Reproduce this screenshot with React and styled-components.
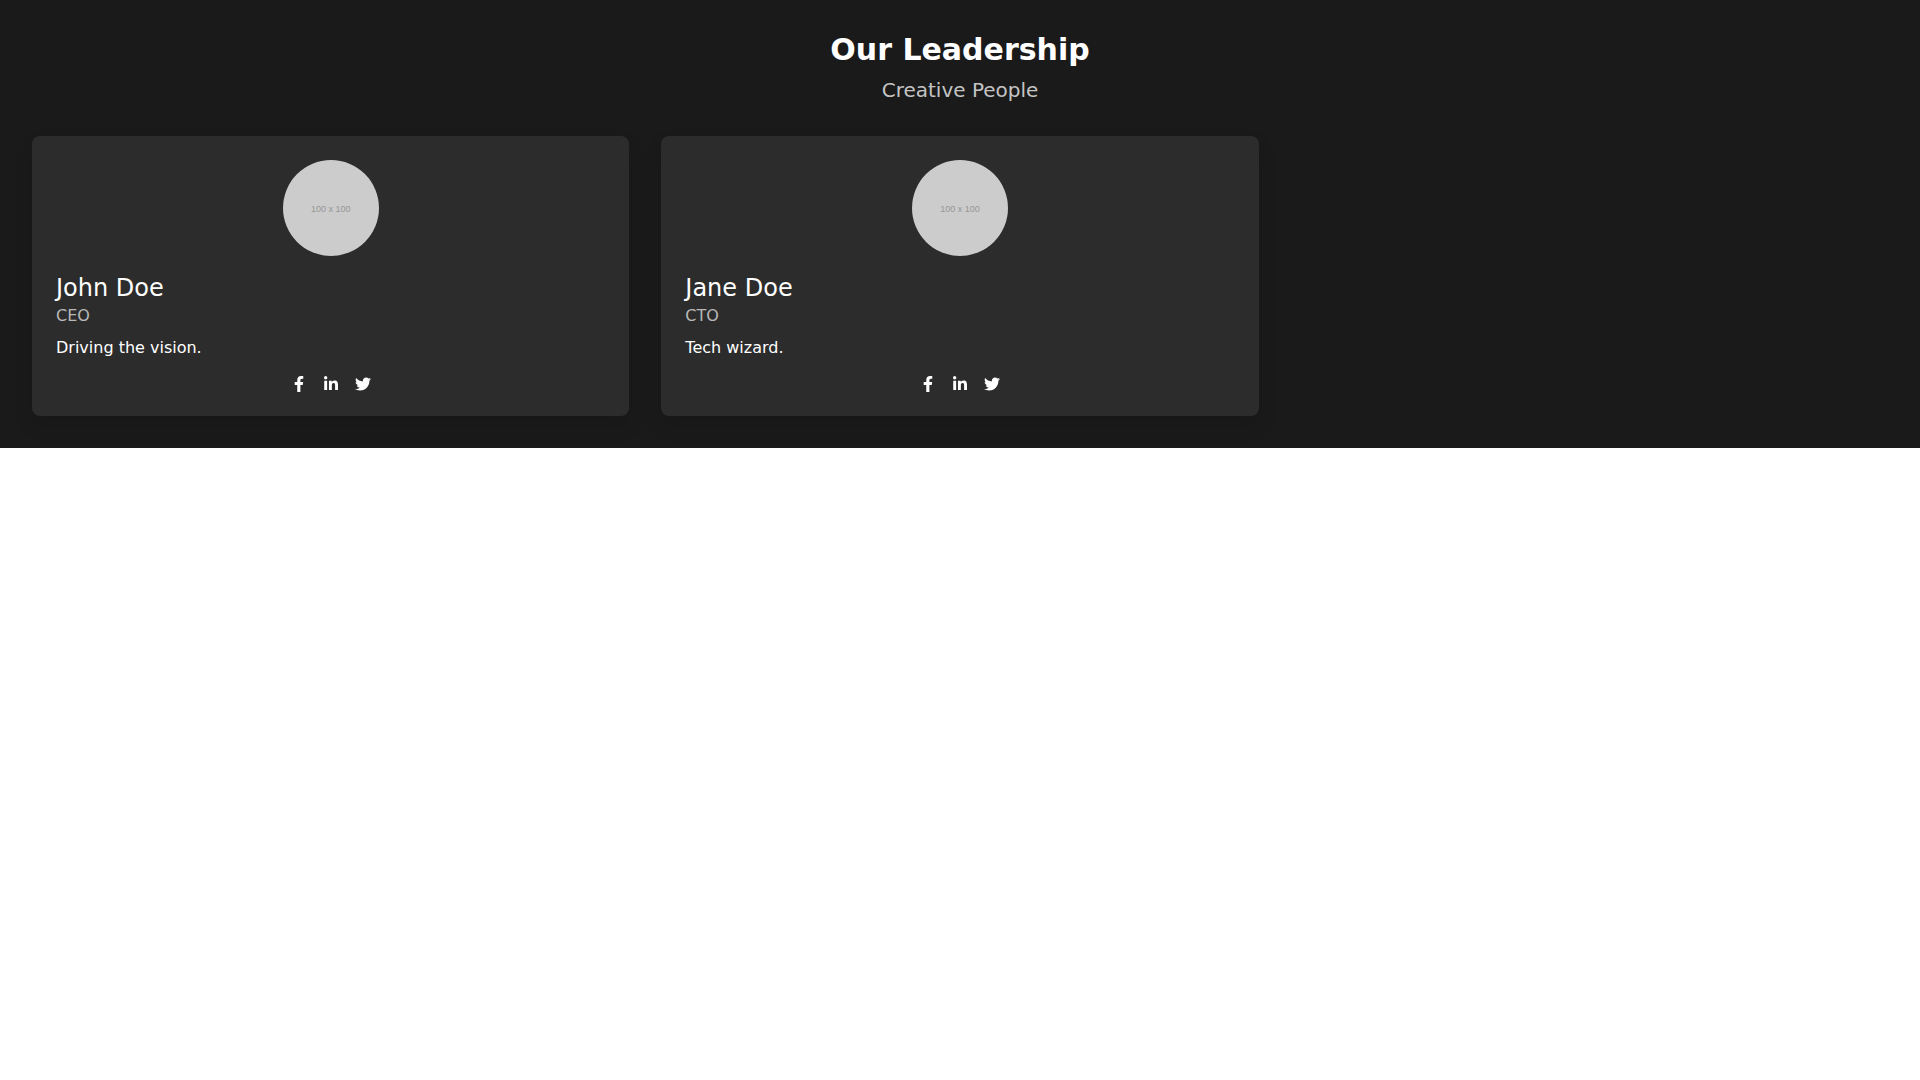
import React from "react";
import styled, { createGlobalStyle } from "styled-components";
import { FaFacebookF, FaLinkedinIn, FaTwitter } from "react-icons/fa";

const members = [
  {
    name: "John Doe",
    role: "CEO",
    bio: "Driving the vision.",
  },
  {
    name: "Jane Doe",
    role: "CTO",
    bio: "Tech wizard.",
  },
];

const socials = [
  { label: "Facebook", Icon: FaFacebookF },
  { label: "LinkedIn", Icon: FaLinkedinIn },
  { label: "Twitter", Icon: FaTwitter },
];

function MemberCard({ member }) {
  return (
    <Card>
      <Avatar>100 x 100</Avatar>
      <Name>{member.name}</Name>
      <Role>{member.role}</Role>
      <Bio>{member.bio}</Bio>
      <Socials>
        {socials.map(({ label, Icon }) => (
          <SocialLink key={label} href="#" aria-label={`${member.name} on ${label}`}>
            <Icon />
          </SocialLink>
        ))}
      </Socials>
    </Card>
  );
}

function App() {
  return (
    <>
      <GlobalStyle />
      <Section>
        <Header>
          <Title>Our Leadership</Title>
          <Subtitle>Creative People</Subtitle>
        </Header>
        <Grid>
          {members.map((member) => (
            <MemberCard key={member.name} member={member} />
          ))}
        </Grid>
      </Section>
    </>
  );
}

const GlobalStyle = createGlobalStyle`
  *, *::before, *::after {
    box-sizing: border-box;
  }
  body {
    margin: 0;
    background-color: #fff;
    font-family: "DejaVu Sans", sans-serif;
    font-size: 16px;
    line-height: 24px;
  }
  h2, h3, p {
    margin: 0;
    font-weight: 400;
  }
`;

const Section = styled.section`
  padding: 32px;
  background-color: #1a1a1a;
  color: #fff;
`;

const Header = styled.header`
  margin-bottom: 32px;
  text-align: center;
`;

const Title = styled.h2`
  font-size: 30px;
  line-height: 36px;
  font-weight: 700;
`;

const Subtitle = styled.p`
  margin-top: 8px;
  font-size: 20px;
  line-height: 28px;
  color: #c4c4c4;
`;

const Grid = styled.div`
  display: grid;
  grid-template-columns: repeat(3, minmax(0, 1fr));
  gap: 32px;

  @media (max-width: 767px) {
    grid-template-columns: minmax(0, 1fr);
  }
`;

const Card = styled.article`
  padding: 24px;
  border-radius: 8px;
  background-color: #2c2c2c;
  box-shadow: 0 10px 20px rgba(0, 0, 0, 0.1);
`;

const Avatar = styled.div`
  display: flex;
  align-items: center;
  justify-content: center;
  width: 96px;
  height: 96px;
  margin: 0 auto 16px;
  padding-top: 2px;
  border-radius: 50%;
  background-color: #ccc;
  color: #969696;
  font-family: "Liberation Sans", Arial, sans-serif;
  font-size: 9px;
  line-height: 12px;
`;

const Name = styled.h3`
  font-size: 24px;
  line-height: 32px;
`;

const Role = styled.p`
  color: #b8b8b8;
`;

const Bio = styled.p`
  margin-top: 8px;
`;

const Socials = styled.div`
  display: flex;
  justify-content: center;
  gap: 16px;
  margin-top: 16px;
`;

const SocialLink = styled.a`
  display: flex;
  color: #fff;
`;

export default App;
